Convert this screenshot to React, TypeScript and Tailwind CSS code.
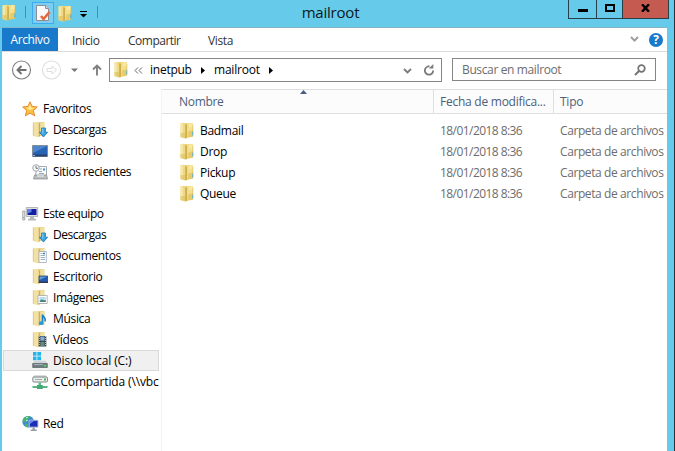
import React from "react";

function Folder() {
  return (
    <svg width="14" height="17" viewBox="0 0 14 17" className="block shrink-0">
      <path d="M4.500 1h7.700q.8 0 .8.8v13L7 15.800z" fill="#e6cb68" />
      <path d="M7 1.200h5.200q.8 0 .8.8v6L7 10z" fill="#f3e08f" />
      <path d="M9 1.200h3.500v4H9z" fill="#f8ebac" opacity=".7" />
      <path d="M.5 1.300 4 .8l2.500.7v15H5L.5 15.300z" fill="#efd984" />
      <path d="M.7 1.600h2.200v13.300l-2.200-.5z" fill="#f7e8a8" />
      <path d="M.5 11h5v5l-5-.9z" fill="#dec05c" opacity=".6" />
      <path d="M5.200 2 7.200 3.200v12.200l-1.400 1-.6-.4z" fill="#cfae50" />
      <path d="M7.200 3.800h.9v11h-.9z" fill="#f3df8d" />
      <path d="M13.300 9v4.500h-1V10z" fill="#4ba8df" />
      <path d="M12.900 3v6" stroke="#d3b755" strokeWidth=".6" />
    </svg>
  );
}

function OpenFolder({ children }: { children?: React.ReactNode }) {
  return (
    <svg width="16" height="17" viewBox="0 0 16 17" className="block shrink-0">
      <path d="M5 1h7.500v14H5z" fill="#e6d088" />
      <path d="M8.500 1.500H12v12.500H8.500z" fill="#f1e09e" />
      <path d="M1 1.300 5.500.9l1.500.8v14.500H6L1 15z" fill="#f3e1a4" />
      <path d="M1.300 1.600v13.200" stroke="#d8bd74" strokeWidth=".7" />
      <path d="M6.700 1.700 8 2.600v12.400l-1 1-.3-.2z" fill="#cdae60" />
      {children}
    </svg>
  );
}

function Download() {
  return (
    <OpenFolder>
      <path d="M9.600 7h3.800v4.200h2.200L11.500 16l-4.100-4.800h2.200z" fill="#39a5e5" stroke="#1675b5" strokeWidth=".8" />
      <path d="M10.800 7.500v5" stroke="#8bd0f5" />
    </OpenFolder>
  );
}
function Docs() {
  return (
    <OpenFolder>
      <path d="M7 4.500h7.300v11H7z" fill="#fff" stroke="#9baab8" strokeWidth=".8" />
      <path d="M8.500 6.500h2M8.500 8.500h4.500M8.500 10.500h4.500M8.500 12.500h4.500" stroke="#8da6bd" strokeWidth=".9" />
      <path d="M11 6.500h2" stroke="#397bc2" strokeWidth="1.400" />
    </OpenFolder>
  );
}
function DeskFolder() {
  return (
    <OpenFolder>
      <path d="M7 8h8.500v6H7z" fill="#2458b0" stroke="#343f54" strokeWidth=".8" />
      <path d="M7.500 8.500H15L7.500 12z" fill="#5e9bdd" />
      <path d="M6.500 14.500H16" stroke="#30394a" />
    </OpenFolder>
  );
}
function Images() {
  return (
    <OpenFolder>
      <path d="M6 6.500h9.200v8H6z" fill="#fff" stroke="#a1a8a9" strokeWidth=".8" />
      <path d="M7.500 8h6.300v5H7.500z" fill="#b5dcf1" />
      <path d="m7.500 13 1.500-2.500 4.800 1V13z" fill="#4b8078" />
    </OpenFolder>
  );
}
function Music() {
  return (
    <OpenFolder>
      <path d="M10.500 13V4.500c.3 2.500 4 3 2.500 7" fill="none" stroke="#1580c9" strokeWidth="1.600" />
      <ellipse cx="9.200" cy="13.200" rx="2.300" ry="1.900" fill="#2898de" />
    </OpenFolder>
  );
}
function Videos() {
  return (
    <OpenFolder>
      <path d="M6.700 5h7.600v10.500H6.700z" fill="#303a43" />
      <path d="M8.300 5.500h4.200v4.200H8.300z" fill="#83add2" />
      <path d="M8.300 10.700h4.200V15H8.300z" fill="#648a83" />
      <path d="M7.400 5v10.500M13.500 5v10.500" stroke="#dce2e4" strokeWidth=".8" strokeDasharray="1 1" />
    </OpenFolder>
  );
}
function Star() {
  return (
    <svg width="16" height="16" viewBox="0 0 16 16" className="block shrink-0">
      <path d="m8 .8 2.100 4.600 5.200.6-3.900 3.600 1.300 5.300L8 12.100l-4.700 2.800 1.300-5.300L.7 6l5.200-.6z" fill="#fcc23f" stroke="#e58a35" />
      <path d="m8 3 1.200 3.600L12 7 8 9 4 7l2.800-.4z" fill="#ffeaa0" />
    </svg>
  );
}
function Desktop() {
  return (
    <svg width="16" height="16" viewBox="0 0 16 16" className="block shrink-0">
      <path d="M.5 2.500h15v11H.5z" fill="#2862b5" stroke="#848d9a" />
      <path d="M1 3h14L1 10z" fill="#4b86d0" />
      <path d="M1 12.500h14" stroke="#28406b" strokeWidth="2" />
      <path d="M1 12.500h2" stroke="#78b9e9" />
    </svg>
  );
}
function Recent() {
  return (
    <svg width="16" height="16" viewBox="0 0 16 16" className="block shrink-0">
      <path d="M5 2.500h9.500v9H3.500z" fill="#f9fbfc" stroke="#a5abae" />
      <path d="M8 5h2M7 7.500h3M7 9.500h5" stroke="#91a8bb" />
      <path d="M11 4.500h2v2h-2z" fill="#3f8fe0" />
      <path d="M2.500 11h12l1 4h-14z" fill="#b9bdbd" stroke="#83898a" strokeWidth=".7" />
      <path d="M5 12h7" stroke="#f5f5f5" />
      <circle cx="4" cy="4" r="3.300" fill="#f4f6f7" stroke="#a5a9ab" />
      <path d="M4 2v2.300h2" fill="none" stroke="#555" strokeWidth=".8" />
    </svg>
  );
}
function Computer() {
  return (
    <svg width="17" height="16" viewBox="0 0 17 16" className="block shrink-0">
      <path d="M.7 5h2.100v9H.7z" fill="#e6e8e8" stroke="#8a8f92" strokeWidth=".7" />
      <path d="M1.200 11.500h1" stroke="#59af50" />
      <path d="M4.200 1.500h11.500v9H4.200z" fill="#dfe2e4" stroke="#a2a8ac" strokeWidth=".8" />
      <path d="M5.500 3h9v6h-9z" fill="#1420a3" />
      <path d="M5.500 3h4v3l-4 1.500z" fill="#6482df" />
      <path d="M8 10.800h4v2h2v1.700H6v-1.700h2z" fill="#b4b8ba" />
    </svg>
  );
}
function Disk() {
  return (
    <svg width="16" height="17" viewBox="0 0 16 17" className="block shrink-0">
      <path d="M1 0h3.500v3.700H1zM5.300 0h3.800v3.700H5.300zM1 4.500h3.500v3.700H1zM5.300 4.500h3.800v3.700H5.300z" fill="#20b7ed" />
      <path d="m2.500 8.800-2 2.800h15l-2-2.800z" fill="#d2d6d8" />
      <path d="M.7 11.500h14.600v4H.7z" fill="#707c83" stroke="#535d62" strokeWidth=".7" />
      <path d="M2 12.500h9" stroke="#a9b2b6" />
      <path d="M12 13h2.200v1.500H12z" fill="#49e64a" />
    </svg>
  );
}
function NetworkDrive() {
  return (
    <svg width="17" height="17" viewBox="0 0 17 17" className="block shrink-0">
      <path d="M2.500 2h11l2 2.500H.5z" fill="#d9dcdc" />
      <rect x=".8" y="4" width="14.700" height="5" rx="1.200" fill="#ededed" stroke="#7c8485" />
      <path d="M3 6.500h7" stroke="#a5abac" />
      <path d="M12 5.500h2v2h-2z" fill="#39bc48" />
      <path d="M6.500 9.500h2.500v3H6.500z" fill="#58bd86" />
      <path d="M.5 14h15" stroke="#43a473" strokeWidth="1.700" />
      <path d="M5 12h5.700v4H5z" fill="#45a976" />
    </svg>
  );
}
function Network() {
  return (
    <svg width="17" height="17" viewBox="0 0 17 17" className="block shrink-0">
      <circle cx="6.200" cy="6.700" r="5.800" fill="#3689d4" />
      <path d="M2 3C4 .8 7 .7 8.500 1.200L7.200 3.400l-2 .6-.5 2.500L1 8C.3 6 .8 4.300 2 3M3 8l3 1 .2 3.200L4 12 2.700 10z" fill="#4ab36b" />
      <path d="m4 3 2-1M4 6l2-1" stroke="#d0f4f3" />
      <path d="M7.200 5.200H16v7H7.200z" fill="#1c2db9" stroke="#bcc4ce" />
      <path d="M8 6h4L8 9z" fill="#6487e5" />
      <path d="M10.500 12.500h2.300v2h2V16H8.700v-1.500h1.800z" fill="#959da4" />
    </svg>
  );
}

type Item = { icon: React.FC; label: string; root?: boolean; selected?: boolean; track?: string };

const groups: Item[][] = [
  [
    { icon: Star, label: "Favoritos", root: true },
    { icon: Download, label: "Descargas", track: "tracking-[-0.45px]" },
    { icon: Desktop, label: "Escritorio" },
    { icon: Recent, label: "Sitios recientes", track: "tracking-[-0.38px]" },
  ],
  [
    { icon: Computer, label: "Este equipo", root: true, track: "tracking-[-0.45px]" },
    { icon: Download, label: "Descargas", track: "tracking-[-0.45px]" },
    { icon: Docs, label: "Documentos", track: "tracking-[-0.35px]" },
    { icon: DeskFolder, label: "Escritorio" },
    { icon: Images, label: "Imágenes", track: "tracking-[-0.45px]" },
    { icon: Music, label: "Música" },
    { icon: Videos, label: "Vídeos", track: "tracking-[-0.35px]" },
    { icon: Disk, label: "Disco local (C:)", selected: true, track: "tracking-[-0.1px]" },
    { icon: NetworkDrive, label: "CCompartida (\\\\vbc", track: "tracking-[-0.15px]" },
  ],
  [{ icon: Network, label: "Red", root: true }],
];

function SideRow({ item }: { item: Item }) {
  const Icon = item.icon;
  return (
    <div
      className={
        "flex h-[21px] w-[156px] items-center border whitespace-nowrap " +
        (item.selected ? "border-[#d9d9d9] bg-[#f0f0f0] " : "border-transparent ") +
        (item.root ? "pl-[18px]" : "pl-[28px]")
      }
    >
      <span className="w-[21px] shrink-0">
        <Icon />
      </span>
      <span className={item.track ?? "tracking-[-0.32px]"}>{item.label}</span>
    </div>
  );
}

export default function App() {
  return (
    <div className="flex h-[451px] w-[675px] flex-col overflow-hidden border-r border-[#25333a] bg-[#66cbea] pr-[7px] pl-[2px] font-['Open_Sans','Noto_Sans',sans-serif] text-[12px] leading-[20px] tracking-[-0.25px] text-black">
      <header className="-mr-[7px] flex h-[27px] shrink-0">
        <div className="flex w-[160px] items-start">
          <div className="mt-[4px] w-[23px]"><Folder /></div>
          <div className="mt-[6px] h-[12px] w-px bg-[#5c8899]" />
          <div className="mt-[2px] ml-[6px] flex h-[22px] w-[22px] items-center justify-center border border-[#3da9ef] bg-[#7ccdf0]">
            <svg width="16" height="18" viewBox="0 0 16 18">
              <path d="M1.500 1.500h9l3 3v12h-12z" fill="#f9f9fa" stroke="#8c8e97" />
              <path d="M10.500 1.500v3h3" fill="#ddd" stroke="#8c8e97" />
              <path d="m6 12 2.500 3L14.500 8" fill="none" stroke="#e6683c" strokeWidth="2.500" />
            </svg>
          </div>
          <div className="mt-[5px] ml-[4px] w-[22px]"><Folder /></div>
          <svg width="7" height="7" viewBox="0 0 7 7" className="mt-[11px]">
            <path d="M0 .5h7" stroke="#000" />
            <path d="M0 3h7L3.500 6.500z" />
          </svg>
          <div className="mt-[6px] ml-[10px] h-[12px] w-px bg-[#5c8899]" />
        </div>
        <h1 className="w-[337px] text-center text-[15px] leading-[25px] tracking-[-0.2px] text-[#0b181c]">mailroot</h1>
        <div className="ml-[69px] flex h-[19px] border border-t-0 border-[#283e48]">
          <div className="flex w-[28px] justify-center border-r border-[#283e48] pt-[9px]"><i className="h-[3px] w-[10px] bg-black" /></div>
          <div className="flex w-[26px] justify-center border-r border-[#283e48] pt-[4px]"><i className="h-[8px] w-[10px] border-2 border-black" /></div>
          <div className="flex w-[45px] justify-center bg-[#c45a50] pt-[4px]">
            <svg width="9" height="8" viewBox="0 0 9 8"><path d="m1 .3 7 7.400M8 .3 1 7.700" stroke="#000" strokeWidth="2.400" /></svg>
          </div>
        </div>
      </header>

      <nav className="flex h-[25px] shrink-0 items-center border-t border-b border-t-[#84b5c7] border-b-[#dadbdc] bg-white text-[#333]">
        <div className="h-[23px] w-[56px] bg-[#1979ca] text-center leading-[23px] tracking-[-0.4px] text-white">Archivo</div>
        <div className="ml-[14px] w-[28px] tracking-[-0.35px] leading-[24px] pt-[2px]">Inicio</div>
        <div className="ml-[28px] w-[52px] pt-[2px] tracking-[-0.5px]">Compartir</div>
        <div className="ml-[28px] flex-1 pt-[2px] tracking-[-0.35px]">Vista</div>
        <svg width="9" height="7" viewBox="0 0 9 7"><path d="m1 1 3.500 3.600L8 1" fill="none" stroke="#9d9d9d" strokeWidth="2" /></svg>
        <div className="mr-[4px] ml-[10px] flex h-[14px] w-[14px] items-center justify-center rounded-full bg-[#1979ca] text-[12px] font-bold tracking-normal text-white">?</div>
      </nav>

      <div className="flex h-[37px] shrink-0 bg-white pt-[6px]">
        <div className="flex h-[24px] w-[107px] items-center">
          <svg width="107" height="24" viewBox="0 0 107 24" fill="none">
            <circle cx="19.500" cy="12" r="9" stroke="#828282" strokeWidth="1.200" />
            <path d="M24.500 12h-9M19.500 8l-4 4 4 4" stroke="#707070" strokeWidth="1.900" />
            <circle cx="49.500" cy="12" r="9" stroke="#ddd" strokeWidth="1.100" />
            <path d="M45 10.500h5V8l4.500 4-4.500 4v-2.500h-5z" stroke="#ddd" />
            <path d="M69 10.500h7L72.500 14z" fill="#777" />
            <path d="M95 17.500V8M91 11.500l4-4 4 4" stroke="#808080" strokeWidth="1.900" />
          </svg>
        </div>
        <div className="flex h-[24px] w-[333px] items-center border border-[#858585]">
          <div className="-mt-[2px] ml-[4px] w-[20px]"><Folder /></div>
          <svg width="9" height="7" viewBox="0 0 9 7" fill="none" stroke="#666"><path d="m4 .5-3 3 3 3M8 .5l-3 3 3 3" /></svg>
          <span className="ml-[7px] w-[51px] tracking-[-0.25px]">inetpub</span>
          <svg width="4" height="7" viewBox="0 0 4 7"><path d="m0 0 4 3.500L0 7z" /></svg>
          <span className="ml-[9px] w-[55px] tracking-[-0.22px]">mailroot</span>
          <svg width="4" height="7" viewBox="0 0 4 7"><path d="m0 0 4 3.500L0 7z" /></svg>
          <svg width="38" height="14" viewBox="0 0 38 14" fill="none" stroke="#7a7a7a" strokeWidth="1.800" className="mr-[3px] ml-auto">
            <path d="m4 6 3.500 3.500L11 6" />
            <path d="M31.200 3.900A4.200 4.200 0 1 0 33.200 7.500" />
            <path d="M29.500 1h4.500v4.500h-4.500z" fill="#fff" stroke="none" />
            <path d="M33.300 1v4.500h-4.500z" fill="#7a7a7a" stroke="none" />
          </svg>
        </div>
        <div className="ml-[10px] flex h-[23px] w-[204px] items-center justify-between border border-[#858585] pr-[9px] pl-[9px] text-[#6d6d6d]">
          <span className="tracking-[-0.37px]">Buscar en mailroot</span>
          <svg width="12" height="12" viewBox="0 0 12 12" fill="none" stroke="#737373"><circle cx="7.500" cy="4.500" r="3.300" strokeWidth="1.700" /><path d="m5 7-4 4" strokeWidth="2" /></svg>
        </div>
      </div>

      <div className="flex min-h-0 flex-1 bg-white">
        <aside className="flex w-[160px] shrink-0 flex-col gap-[21px] border-r border-[#f3f3f3] pt-[9px] pl-px">
          {groups.map((g, i) => (
            <div key={i}>{g.map((item) => <SideRow key={item.label} item={item} />)}</div>
          ))}
        </aside>
        <main className="min-w-0 flex-1">
          <div className="flex h-[25px] border-t border-b border-[#dedfe1] bg-[#fcfcfc] leading-[23px] text-[#4c607a]">
            <div className="flex w-[272px] border-r border-[#dedfe1] pl-[17px]">
              <span className="w-[121px] tracking-[-0.3px]">Nombre</span>
              <svg width="7" height="4" viewBox="0 0 7 4"><path d="M0 4h7L3.500 0z" fill="#435f80" /></svg>
            </div>
            <div className="w-[120px] border-r border-[#dedfe1] pl-[6px] whitespace-nowrap">Fecha de modifica...</div>
            <div className="pl-[6px]">Tipo</div>
          </div>
          <div className="pt-[6px]">
            {["Badmail", "Drop", "Pickup", "Queue"].map((name) => (
              <div key={name} className="flex h-[21px] items-center whitespace-nowrap">
                <div className="w-[38px] pl-[18px]"><Folder /></div>
                <div className="w-[240px] tracking-[-0.3px]">{name}</div>
                <div className="w-[120px] tracking-[-0.56px] text-[#6d6d6d]">18/01/2018 8:36</div>
                <div className="tracking-[-0.4px] text-[#6d6d6d]">Carpeta de archivos</div>
              </div>
            ))}
          </div>
        </main>
      </div>
    </div>
  );
}
